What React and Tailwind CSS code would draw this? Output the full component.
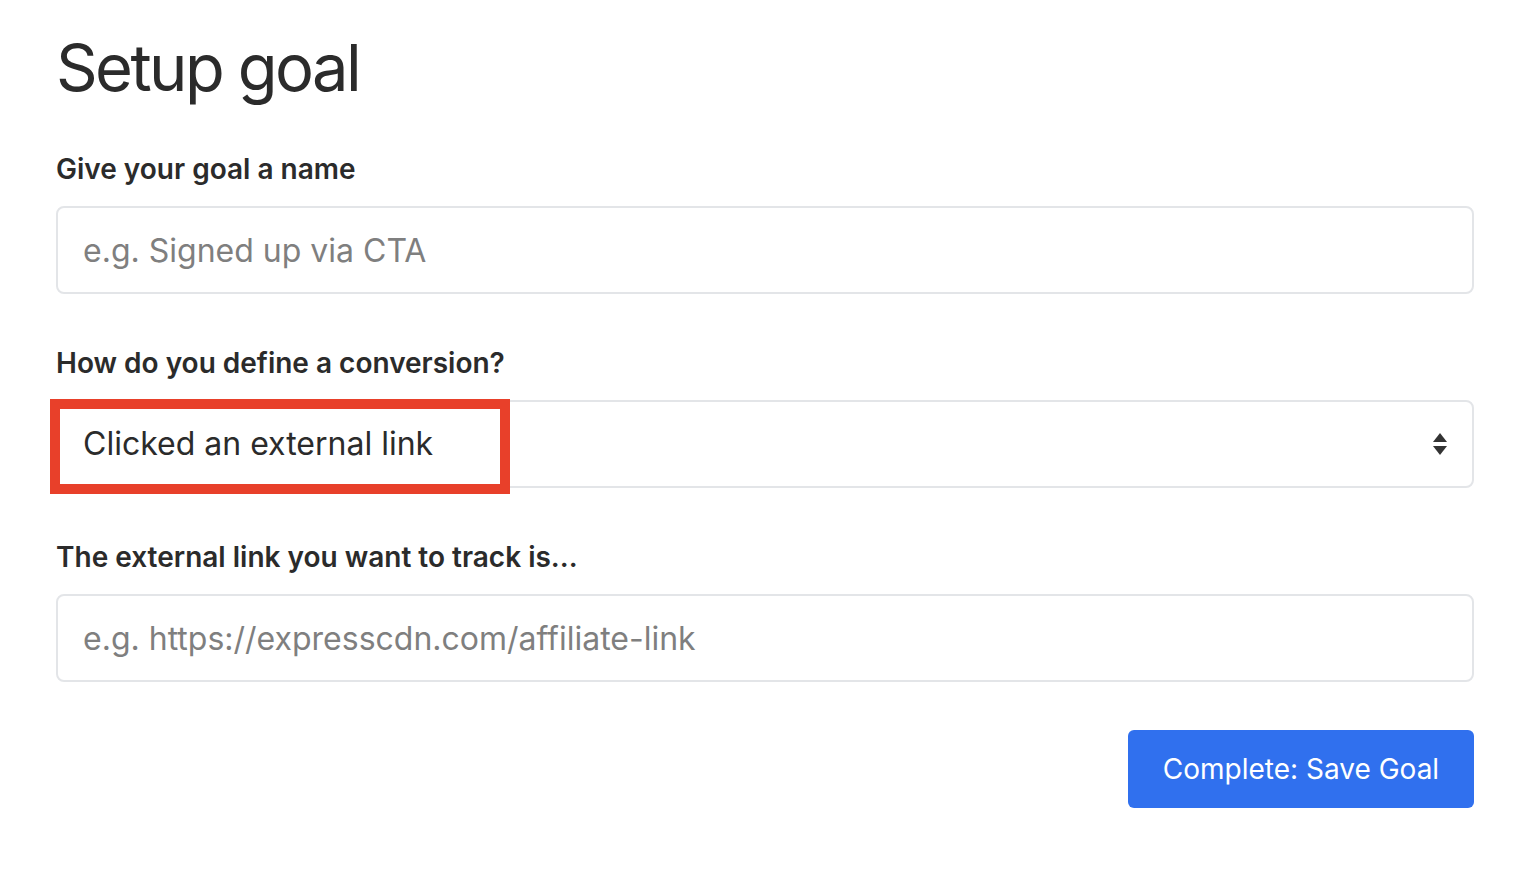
import React from 'react';

const font = { fontFamily: 'Inter, "Noto Sans", sans-serif' };

const Field = ({ label, children }) => (
  <div className="flex flex-col">
    <label className="text-[28px] leading-[36px] font-semibold text-[#2b2b2b]">{label}</label>
    <div className="mt-[19px]">{children}</div>
  </div>
);

const TextInput = ({ placeholder }) => (
  <input
    type="text"
    placeholder={placeholder}
    className="w-full h-[88px] rounded-[8px] border-2 border-[#e3e5e8] bg-white px-[25px] text-[32px] text-[#2b2b2b] placeholder:text-[#7f7f7f] outline-none"
  />
);

const SortArrows = () => (
  <svg width="16" height="24" viewBox="0 0 16 24" className="text-[#333]">
    <path d="M8 1 L15 10 H1 Z" fill="currentColor" />
    <path d="M8 23 L15 14 H1 Z" fill="currentColor" />
  </svg>
);

export default function App() {
  return (
    <div className="min-h-screen bg-white pl-[56px] pr-[62px] pt-[28px]" style={font}>
      <h1 className="text-[65px] leading-[80px] font-normal text-[#2b2b2b] tracking-[-2.6px]">
        Setup goal
      </h1>

      <div className="mt-[43px] flex flex-col gap-[51px]">
        <Field label="Give your goal a name">
          <TextInput placeholder="e.g. Signed up via CTA" />
        </Field>

        <Field label="How do you define a conversion?">
          <div className="relative">
            <div className="flex h-[88px] items-center justify-between rounded-[8px] border-2 border-[#e3e5e8] bg-white pl-[25px] pr-[24px]">
              <span className="text-[32px] text-[#2b2b2b]">Clicked an external link</span>
              <SortArrows />
            </div>
            {/* highlight annotation */}
            <div className="absolute left-[-6px] top-[-1px] h-[95px] w-[460px] border-[10px] border-[#e8402a]" />
          </div>
        </Field>

        <Field label="The external link you want to track is...">
          <TextInput placeholder="e.g. https://expresscdn.com/affiliate-link" />
        </Field>
      </div>

      <div className="mt-[48px] flex justify-end">
        <button className="h-[78px] w-[346px] rounded-[6px] bg-[#3070ee] text-[28px] text-white">
          Complete: Save Goal
        </button>
      </div>
    </div>
  );
}
